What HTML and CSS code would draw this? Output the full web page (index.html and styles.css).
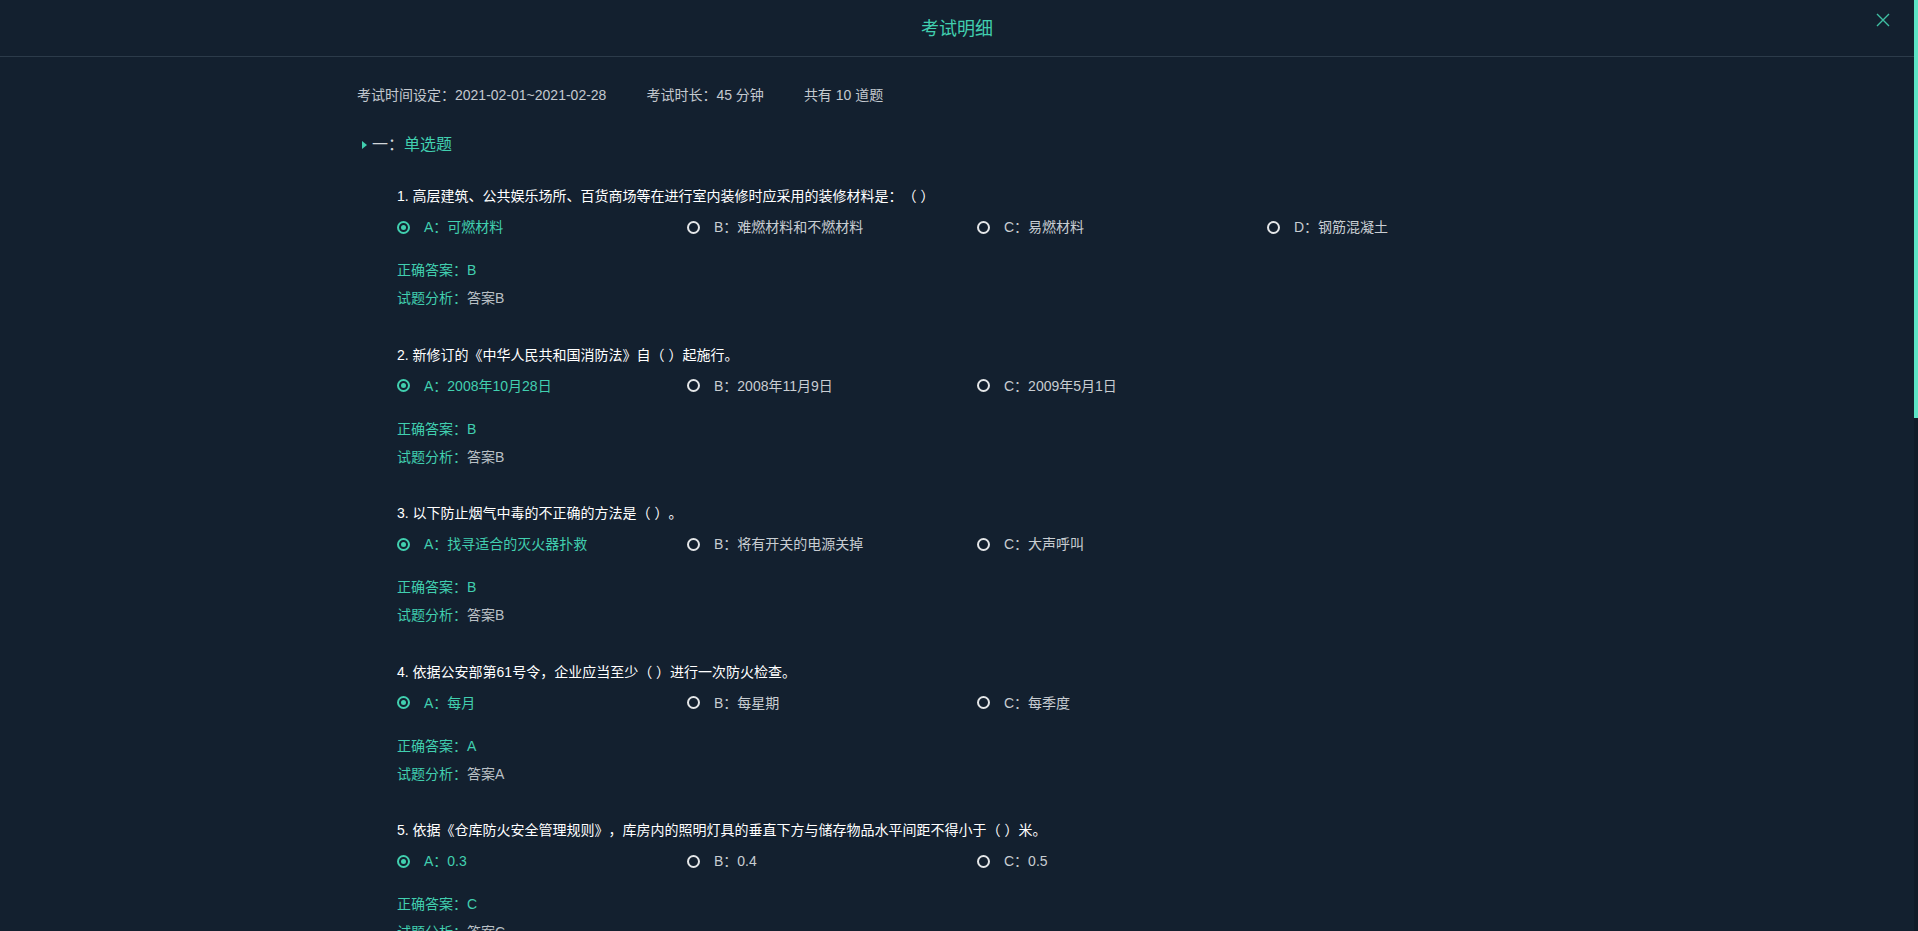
FILE: index.html
```html
<!DOCTYPE html>
<html lang="zh-CN">
<head>
<meta charset="utf-8">
<title>考试明细</title>
<link rel="stylesheet" href="styles.css">
</head>
<body>
<div class="app">
  <div class="main">
    <header class="header">
      <h1 class="title">考试明细</h1>
      <button class="close" aria-label="关闭">
        <svg width="14" height="14" viewBox="0 0 14 14"><path d="M1 1 L13 13 M13 1 L1 13" stroke="currentColor" stroke-width="1.4" fill="none"/></svg>
      </button>
    </header>
    <div class="content">
      <div class="meta">
        <span>考试时间设定：2021-02-01~2021-02-28</span>
        <span>考试时长：45 分钟</span>
        <span>共有 10 道题</span>
      </div>
      <div class="section-title"><span class="tri"></span><span class="num">一：</span><span class="sec-name">单选题</span></div>

      <div class="question">
        <div class="q-title">1. 高层建筑、公共娱乐场所、百货商场等在进行室内装修时应采用的装修材料是：（ ）</div>
        <div class="options">
          <div class="opt selected"><span class="radio"></span>A：可燃材料</div>
          <div class="opt"><span class="radio"></span>B：难燃材料和不燃材料</div>
          <div class="opt"><span class="radio"></span>C：易燃材料</div>
          <div class="opt"><span class="radio"></span>D：钢筋混凝土</div>
        </div>
        <div class="answer">正确答案：B</div>
        <div class="analysis"><span class="label">试题分析：</span>答案B</div>
      </div>

      <div class="question">
        <div class="q-title">2. 新修订的《中华人民共和国消防法》自（ ）起施行。</div>
        <div class="options">
          <div class="opt selected"><span class="radio"></span>A：2008年10月28日</div>
          <div class="opt"><span class="radio"></span>B：2008年11月9日</div>
          <div class="opt"><span class="radio"></span>C：2009年5月1日</div>
        </div>
        <div class="answer">正确答案：B</div>
        <div class="analysis"><span class="label">试题分析：</span>答案B</div>
      </div>

      <div class="question">
        <div class="q-title">3. 以下防止烟气中毒的不正确的方法是（ ）。</div>
        <div class="options">
          <div class="opt selected"><span class="radio"></span>A：找寻适合的灭火器扑救</div>
          <div class="opt"><span class="radio"></span>B：将有开关的电源关掉</div>
          <div class="opt"><span class="radio"></span>C：大声呼叫</div>
        </div>
        <div class="answer">正确答案：B</div>
        <div class="analysis"><span class="label">试题分析：</span>答案B</div>
      </div>

      <div class="question">
        <div class="q-title">4. 依据公安部第61号令，企业应当至少（ ）进行一次防火检查。</div>
        <div class="options">
          <div class="opt selected"><span class="radio"></span>A：每月</div>
          <div class="opt"><span class="radio"></span>B：每星期</div>
          <div class="opt"><span class="radio"></span>C：每季度</div>
        </div>
        <div class="answer">正确答案：A</div>
        <div class="analysis"><span class="label">试题分析：</span>答案A</div>
      </div>

      <div class="question">
        <div class="q-title">5. 依据《仓库防火安全管理规则》，库房内的照明灯具的垂直下方与储存物品水平间距不得小于（ ）米。</div>
        <div class="options">
          <div class="opt selected"><span class="radio"></span>A：0.3</div>
          <div class="opt"><span class="radio"></span>B：0.4</div>
          <div class="opt"><span class="radio"></span>C：0.5</div>
        </div>
        <div class="answer">正确答案：C</div>
        <div class="analysis"><span class="label">试题分析：</span>答案C</div>
      </div>

      <div class="question">
        <div class="q-title">6. 发现火灾时，应当立即拨打的火警电话是（ ）。</div>
        <div class="options">
          <div class="opt selected"><span class="radio"></span>A：119</div>
          <div class="opt"><span class="radio"></span>B：110</div>
          <div class="opt"><span class="radio"></span>C：120</div>
        </div>
        <div class="answer">正确答案：A</div>
        <div class="analysis"><span class="label">试题分析：</span>答案A</div>
      </div>

      <div class="question">
        <div class="q-title">7. 电器设备着火时，首先应当（ ）。</div>
        <div class="options">
          <div class="opt selected"><span class="radio"></span>A：用水扑救</div>
          <div class="opt"><span class="radio"></span>B：切断电源</div>
          <div class="opt"><span class="radio"></span>C：打开门窗</div>
        </div>
        <div class="answer">正确答案：B</div>
        <div class="analysis"><span class="label">试题分析：</span>答案B</div>
      </div>

      <div class="question">
        <div class="q-title">8. 干粉灭火器适用于扑救（ ）。</div>
        <div class="options">
          <div class="opt selected"><span class="radio"></span>A：初起火灾</div>
          <div class="opt"><span class="radio"></span>B：大面积火灾</div>
          <div class="opt"><span class="radio"></span>C：金属火灾</div>
        </div>
        <div class="answer">正确答案：A</div>
        <div class="analysis"><span class="label">试题分析：</span>答案A</div>
      </div>

      <div class="question">
        <div class="q-title">9. 安全出口、疏散通道应当（ ）。</div>
        <div class="options">
          <div class="opt selected"><span class="radio"></span>A：保持畅通</div>
          <div class="opt"><span class="radio"></span>B：堆放物品</div>
          <div class="opt"><span class="radio"></span>C：上锁封闭</div>
        </div>
        <div class="answer">正确答案：A</div>
        <div class="analysis"><span class="label">试题分析：</span>答案A</div>
      </div>

      <div class="question">
        <div class="q-title">10. 消防安全重点单位应当（ ）进行一次防火巡查。</div>
        <div class="options">
          <div class="opt selected"><span class="radio"></span>A：每日</div>
          <div class="opt"><span class="radio"></span>B：每周</div>
          <div class="opt"><span class="radio"></span>C：每月</div>
        </div>
        <div class="answer">正确答案：A</div>
        <div class="analysis"><span class="label">试题分析：</span>答案A</div>
      </div>
    </div>
  </div>
  <div class="track"><div class="thumb"></div></div>
</div>
</body>
</html>
```

FILE: styles.css
```css
html, body {
  margin: 0;
  padding: 0;
  height: 100%;
  overflow: hidden;
  background: #13202f;
}

body {
  font-family: "Liberation Sans", "Noto Sans CJK SC", sans-serif;
  font-size: 14px;
  color: #c6cbd1;
  text-spacing-trim: space-all;
}

.app {
  display: flex;
  height: 100vh;
  overflow: hidden;
}

.main {
  flex: 1;
  min-width: 0;
  overflow: hidden;
}

.track {
  width: 4px;
  flex: 0 0 4px;
  background: #101b28;
}

.thumb {
  height: 418px;
  background: #5de3c5;
}

.header {
  position: relative;
  height: 56px;
  border-bottom: 1px solid #2c3b4a;
  display: flex;
  align-items: center;
  justify-content: center;
}

.title {
  margin: 0;
  font-size: 18px;
  font-weight: normal;
  color: #41cfaf;
  line-height: 24px;
  padding-top: 1px;
}

.close {
  position: absolute;
  right: 24px;
  top: 13px;
  width: 14px;
  height: 14px;
  padding: 0;
  border: 0;
  background: none;
  color: #3fbfa3;
  display: flex;
}

.content {
  width: 1200px;
  margin: 0 auto;
  padding-top: 28px;
}

.meta {
  display: flex;
  gap: 40px;
  line-height: 20px;
  color: #c4c9cf;
}

.section-title {
  margin-top: 30px;
  padding-left: 5px;
  display: flex;
  align-items: center;
  font-size: 16px;
  line-height: 20px;
}

.tri {
  width: 0;
  height: 0;
  border-top: 4px solid transparent;
  border-bottom: 4px solid transparent;
  border-left: 5px solid #41cfaf;
  margin-right: 5px;
}

.num {
  color: #d2d6da;
}

.sec-name {
  color: #41cfaf;
}

.question {
  padding-left: 40px;
  margin-bottom: 36.6px;
}

.section-title + .question {
  margin-top: 31px;
}

.q-title {
  line-height: 20px;
  color: #ffffff;
}

.options {
  margin-top: 11px;
  display: grid;
  grid-template-columns: repeat(4, 290px);
  line-height: 20px;
}

.opt {
  display: flex;
  align-items: center;
  color: #c8cdd2;
}

.radio {
  box-sizing: border-box;
  width: 13px;
  height: 13px;
  border: 2px solid #e4e6e8;
  border-radius: 50%;
  margin-right: 14px;
  display: flex;
  align-items: center;
  justify-content: center;
}

.opt.selected {
  color: #41cfaf;
}

.opt.selected .radio {
  border-color: #41cfaf;
}

.opt.selected .radio::after {
  content: "";
  width: 5px;
  height: 5px;
  border-radius: 50%;
  background: #41cfaf;
}

.answer {
  margin-top: 23px;
  line-height: 20px;
  color: #41cfaf;
}

.analysis {
  margin-top: 8px;
  line-height: 20px;
  color: #bac0c6;
}

.label {
  color: #41cfaf;
}
```
